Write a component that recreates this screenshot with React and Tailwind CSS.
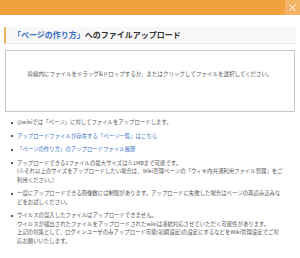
export default function App() {
    const items = [
        { text: ["@wikiでは「ページ」に対してファイルをアップロードします。"] },
        { link: true, text: ["アップロードファイルが存在する「ページ一覧」はこちら"] },
        { link: true, text: ["「ページの作り方」のアップロードファイル履歴"] },
        {
            text: [
                "アップロードできる1ファイルの最大サイズは※1MBまで可能です。",
                "(※それ以上のサイズをアップロードしたい場合は、Wiki管理ページの「ウィキ内共通利用ファイル管理」をご",
                "利用ください。)",
            ],
        },
        {
            text: [
                "一度にアップロードできる画像数には制限があります。アップロードに失敗した場合はページの再読み込みな",
                "どをお試しください。",
            ],
        },
        {
            text: [
                "ウイルスの混入したファイルはアップロードできません。",
                "ウイルスが検出されたファイルをアップロードされたwikiは凍結対応させていただく可能性があります。",
                "上記の対策として、ログインユーザのみアップロード可能(初期設定)の設定にするなどをWiki管理設定でご対",
                "応お願いいたします。",
            ],
        },
    ];

    return (
        <div className="h-[258px] w-[300px] overflow-hidden bg-white font-['Noto_Sans_CJK_JP',sans-serif]">
            <div className="flex h-[15px] justify-end bg-[#f0a140]">
                <button className="flex h-[15px] w-[15px] items-center justify-center bg-[#f4b466]">
                    <svg width="7" height="7" viewBox="0 0 7 7" stroke="white" strokeWidth="1">
                        <path d="M0.5 0.5L6.5 6.5M6.5 0.5L0.5 6.5" />
                    </svg>
                </button>
            </div>
            <div className="px-[4px] pt-[12px]">
                <h2 className="flex h-[17px] items-center whitespace-nowrap border-b border-l-2 border-b-[#ececec] border-l-[#f0b35e] bg-[#f8f8f8] pl-[7px] text-[8px] font-bold text-[#333]">
                    <span className="text-[#3a6fc4]">「ページの作り方」</span>へのファイルアップロード
                </h2>
                <div className="mx-[1px] mt-[6px] h-[62px] whitespace-nowrap border border-[#c8c8c8] pt-[19px] text-center text-[5.5px] leading-[8px] text-[#555]">
                    枠線内にファイルをドラッグ&ドロップするか、またはクリックしてファイルを選択してください。
                </div>
                <ul className="mt-[6px] flex flex-col gap-[5px] pl-[7px] text-[5.4px] text-[#555]">
                    {items.map((it, i) => (
                        <li key={i} className="flex gap-[4px]">
                            <span className="mt-[3.5px] h-[2px] w-[2px] shrink-0 bg-[#555]" />
                            <div className={`whitespace-nowrap ${it.link ? "text-[#3a6fc4]" : ""}`}>
                                {it.text.map((t, j) => (
                                    <div key={j} className="h-[8.5px] leading-[8.5px]">
                                        {t}
                                    </div>
                                ))}
                            </div>
                        </li>
                    ))}
                </ul>
            </div>
        </div>
    );
}
